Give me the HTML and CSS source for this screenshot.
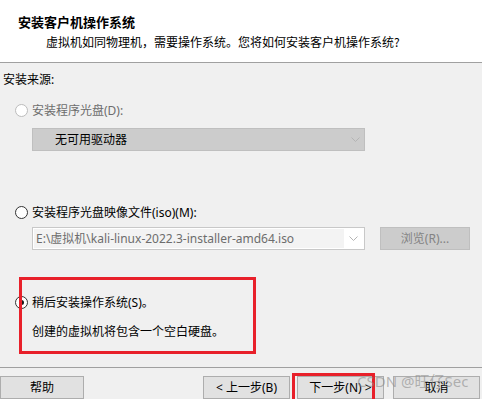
FILE: index.html
```html
<!DOCTYPE html>
<html lang="zh-CN">
<head>
<meta charset="utf-8">
<title>新建虚拟机向导</title>
<link rel="stylesheet" href="styles.css">
</head>
<body>
<div class="dialog">
  <header class="head">
    <div class="title">安装客户机操作系统</div>
    <div class="subtitle">虚拟机如同物理机，需要操作系统。您将如何安装客户机操作系统?</div>
  </header>
  <main class="content">
    <div class="src-label">安装来源:</div>

    <label class="radio-row row-cd disabled">
      <span class="radio"></span>
      <span class="radio-text">安装程序光盘(D):</span>
    </label>
    <div class="field-row row-cd-field">
      <div class="combo combo-disabled">
        <span class="combo-text">无可用驱动器</span>
        <svg class="chev" width="9" height="5" viewBox="0 0 9 5"><polyline points="0.5,0.5 4.5,4.5 8.5,0.5" fill="none" stroke="#b4b4b4" stroke-width="1"/></svg>
      </div>
    </div>

    <label class="radio-row row-iso">
      <span class="radio"></span>
      <span class="radio-text">安装程序光盘映像文件(iso)(M):</span>
    </label>
    <div class="field-row row-iso-field">
      <div class="combo combo-input">
        <span class="combo-text input-text">E:\虚拟机\kali-linux-2022.3-installer-amd64.iso</span>
        <span class="chev-area">
          <svg class="chev" width="9" height="5" viewBox="0 0 9 5"><polyline points="0.5,0.5 4.5,4.5 8.5,0.5" fill="none" stroke="#b4b4b4" stroke-width="1"/></svg>
        </span>
      </div>
      <div class="browse">浏览(R)...</div>
    </div>

    <label class="radio-row row-later">
      <span class="radio checked"></span>
      <span class="radio-text">稍后安装操作系统(S)。</span>
    </label>
    <div class="desc">创建的虚拟机将包含一个空白硬盘。</div>
  </main>
  <footer class="foot">
    <div class="btn btn-help">帮助</div>
    <div class="btn btn-back">&lt; 上一步(B)</div>
    <div class="btn btn-next">下一步(N) &gt;</div>
    <div class="btn btn-cancel">取消</div>
  </footer>

  <div class="highlight hl-later"></div>
  <div class="highlight hl-next"></div>
  <div class="watermark">CSDN @旺仔Sec</div>
</div>
</body>
</html>
```

FILE: styles.css
```css
html, body {
  margin: 0;
  padding: 0;
}
body {
  width: 482px;
  height: 399px;
  overflow: hidden;
  background: #f0f0f0;
  font-family: "Noto Sans", "Noto Sans CJK SC", sans-serif;
  font-size: 12px;
  color: #000;
}
.dialog {
  position: relative;
  width: 482px;
  height: 399px;
  overflow: hidden;
  display: flex;
  flex-direction: column;
}
.head {
  background: #fff;
  border-bottom: 1px solid #a0a0a0;
  padding-top: 13px;
  box-sizing: border-box;
  height: 63px;
}
.title {
  font-family: "Noto Sans CJK SC", sans-serif;
  font-weight: bold;
  font-size: 13px;
  line-height: 18px;
  padding-left: 18px;
}
.subtitle {
  font-family: "Noto Sans CJK SC", sans-serif;
  line-height: 16px;
  margin-top: 3px;
  padding-left: 46px;
}
.content {
  display: flex;
  flex-direction: column;
  padding-top: 9px;
  height: 306px;
  box-sizing: border-box;
  border-bottom: 1px solid #a0a0a0;
}
.src-label {
  line-height: 16px;
  padding-left: 3px;
}
.radio-row {
  display: flex;
  align-items: center;
  height: 16px;
  padding-left: 15px;
  gap: 4px;
}
.radio {
  width: 13px;
  height: 13px;
  box-sizing: border-box;
  border: 1px solid #333;
  border-radius: 50%;
  background: #fff;
  position: relative;
  flex: none;
}
.radio.checked::after {
  content: "";
  position: absolute;
  left: 3px;
  top: 3px;
  width: 5px;
  height: 5px;
  border-radius: 50%;
  background: #1a1a1a;
}
.disabled .radio {
  border-color: #bcbcbc;
}
.disabled .radio-text {
  color: #6d6d6d;
}
.radio-text {
  line-height: 16px;
  white-space: nowrap;
}
.row-cd { margin-top: 15px; }
.row-cd-field { margin-top: 9px; }
.row-iso { margin-top: 54px; }
.row-iso-field { margin-top: 6px; }
.row-later { margin-top: 45px; }

.field-row {
  display: flex;
  padding-left: 32px;
  gap: 15px;
}
.combo {
  width: 333px;
  height: 23px;
  box-sizing: border-box;
  display: flex;
  align-items: center;
}
.combo-disabled {
  background: #cccccc;
  border: 1px solid #bfbfbf;
  padding-left: 22px;
  padding-right: 4px;
}
.combo-text {
  flex: 1;
  white-space: nowrap;
  overflow: hidden;
}
.combo-input {
  background: #fff;
  border: 1px solid #c8c8c8;
  padding: 1px;
}
.input-text {
  align-self: stretch;
  background: #f3f3f3;
  color: #6d6d6d;
  line-height: 19px;
  padding-left: 2px;
}
.chev-area {
  width: 19px;
  display: flex;
  justify-content: flex-start;
  padding-left: 5px;
  box-sizing: border-box;
}
.chev {
  display: block;
  flex: none;
}
.browse {
  width: 90px;
  height: 23px;
  box-sizing: border-box;
  background: #cccccc;
  border: 1px solid #bfbfbf;
  color: #838383;
  text-align: center;
  line-height: 21px;
}
.desc {
  margin-top: 13px;
  padding-left: 32px;
  line-height: 16px;
}
.foot {
  display: flex;
  padding-top: 8px;
}
.btn {
  height: 23px;
  box-sizing: border-box;
  background: #e1e1e1;
  border: 1px solid #adadad;
  text-align: center;
  line-height: 21px;
  width: 87px;
  white-space: nowrap;
}
.btn-help { width: 84px; }
.btn-back { margin-left: 119px; }
.btn-next { margin-left: 7px; }
.btn-cancel { margin-left: 9px; }

.highlight {
  position: absolute;
  border: 3px solid #e8202a;
  box-sizing: border-box;
}
.hl-later {
  left: 19px;
  top: 277px;
  width: 237px;
  height: 77px;
}
.hl-next {
  left: 292px;
  top: 373px;
  width: 83px;
  height: 40px;
}
.watermark {
  position: absolute;
  left: 357px;
  top: 372px;
  font-family: "Noto Sans", "Noto Sans CJK SC", sans-serif;
  font-size: 15px;
  line-height: 18px;
  color: rgba(140, 140, 140, 0.6);
  white-space: nowrap;
}
```
